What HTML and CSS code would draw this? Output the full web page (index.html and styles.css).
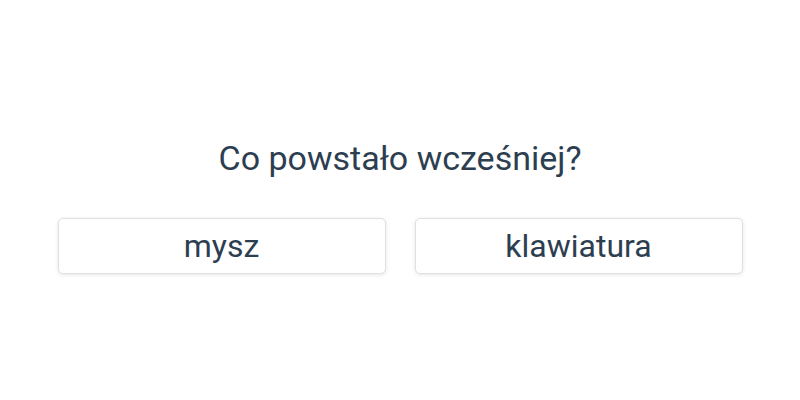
FILE: index.html
```html
<!DOCTYPE html>
<html lang="pl">
<head>
    <meta charset="UTF-8">
    <meta name="viewport" content="width=device-width, initial-scale=1.0">
    <title>Quiz</title>
    <link rel="stylesheet" href="styles.css">
</head>
<body>
    <div class="quiz">
        <h2 class="question">Co powstało wcześniej?</h2>
        <div class="answers">
            <button class="answer">mysz</button>
            <button class="answer">klawiatura</button>
        </div>
    </div>
</body>
</html>
```

FILE: styles.css
```css
* {
    margin: 0;
    padding: 0;
    box-sizing: border-box;
}

body {
    font-family: Roboto, 'Noto Sans', sans-serif;
    background: #fff;
    color: #2c3e50;
    height: 100vh;
    padding-top: 138px;
    display: flex;
    justify-content: center;
}

.quiz {
    width: 685px;
    text-align: center;
}

.question {
    font-size: 34px;
    font-weight: 400;
    line-height: 40px;
    margin-bottom: 40px;
}

.answers {
    display: grid;
    grid-template-columns: 1fr 1fr;
    gap: 29px;
}

.answer {
    height: 56px;
    background: #fff;
    border: 1px solid #e0e0e0;
    border-radius: 5px;
    box-shadow: 0 1px 4px rgba(0, 0, 0, 0.1);
    font-family: inherit;
    font-size: 32px;
    color: #2c3e50;
    cursor: pointer;
}
```
